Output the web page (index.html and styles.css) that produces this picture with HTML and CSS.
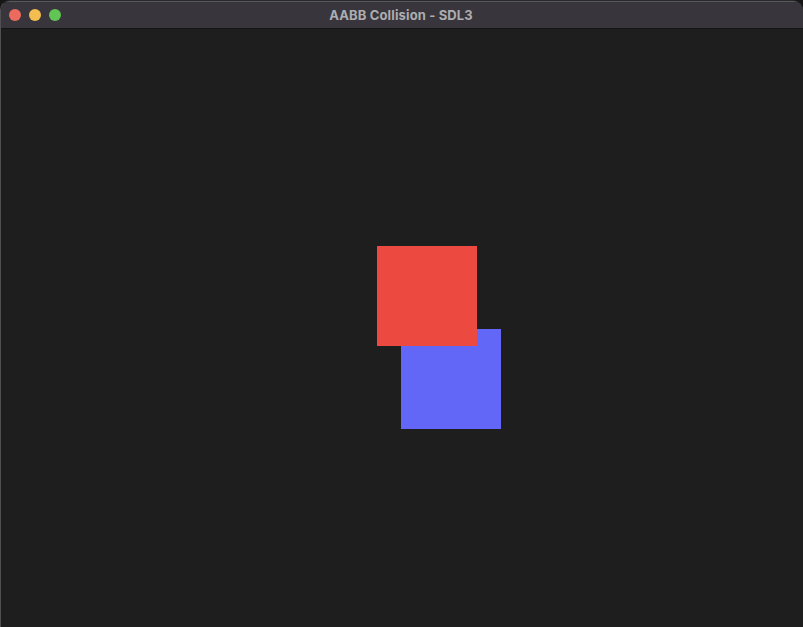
FILE: index.html
```html
<!DOCTYPE html>
<html lang="en">
<head>
<meta charset="utf-8">
<title>AABB Collision - SDL3</title>
<link rel="stylesheet" href="styles.css">
</head>
<body>
<div class="window">
  <header class="titlebar">
    <div class="lights">
      <span class="light light-close"></span>
      <span class="light light-min"></span>
      <span class="light light-max"></span>
    </div>
    <div class="title">AABB Collision - SDL3</div>
  </header>
  <main class="canvas">
    <div class="box box-blue"></div>
    <div class="box box-red"></div>
  </main>
</div>
</body>
</html>
```
FILE: styles.css
```css
html, body {
  margin: 0;
  padding: 0;
  width: 803px;
  height: 627px;
  overflow: hidden;
  background: #161616;
}
.window {
  box-sizing: border-box;
  width: 803px;
  height: 627px;
  display: flex;
  flex-direction: column;
  border-radius: 10px 10px 0 0;
  overflow: hidden;
  background: #1e1e1e;
  border-top: 1px solid #2a2a2c;
  border-left: 1px solid #505052;
}
.titlebar {
  position: relative;
  box-sizing: border-box;
  height: 28px;
  flex: none;
  display: flex;
  align-items: center;
  background: #38363c;
  border-top: 1px solid #59585c;
  border-bottom: 1px solid #141414;
}
.lights {
  display: flex;
  gap: 8px;
  padding-left: 8px;
}
.light {
  width: 12px;
  height: 12px;
  border-radius: 50%;
}
.light-close { background: #ec6a5e; }
.light-min { background: #f4bd4f; }
.light-max { background: #61c454; }
.title {
  position: absolute;
  left: 0;
  right: 2px;
  top: 0;
  bottom: 1px;
  display: flex;
  align-items: center;
  justify-content: center;
  font: 700 13px "Inter", "Liberation Sans", sans-serif;
  letter-spacing: 0.14px;
  color: #aeadb0;
}
.canvas {
  position: relative;
  flex: 1;
  background: #1e1e1e;
}
.box {
  position: absolute;
  width: 100px;
  height: 100px;
}
.box-red {
  left: 376px;
  top: 217px;
  background: #ec4a40;
}
.box-blue {
  left: 400px;
  top: 300px;
  background: #6267f8;
}
```
